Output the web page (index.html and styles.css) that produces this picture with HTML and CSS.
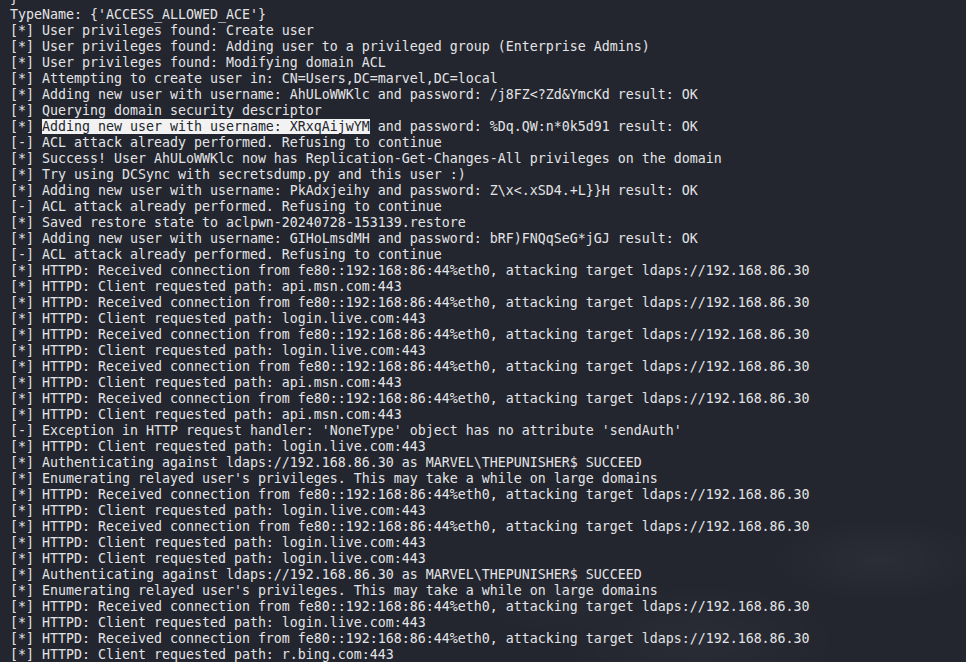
FILE: index.html
```html
<!DOCTYPE html>
<html>
<head>
<meta charset="utf-8">
<link rel="stylesheet" href="styles.css">
</head>
<body>
<div class="terminal">
<div class="wallpaper"></div>
<div class="output">
<div class="line">}</div>
<div class="line">TypeName: {'ACCESS_ALLOWED_ACE'}</div>
<div class="line">[*] User privileges found: Create user</div>
<div class="line">[*] User privileges found: Adding user to a privileged group (Enterprise Admins)</div>
<div class="line">[*] User privileges found: Modifying domain ACL</div>
<div class="line">[*] Attempting to create user in: CN=Users,DC=marvel,DC=local</div>
<div class="line">[*] Adding new user with username: AhULoWWKlc and password: /j8FZ&lt;?Zd&amp;YmcKd result: OK</div>
<div class="line">[*] Querying domain security descriptor</div>
<div class="line">[*] <span class="sel">Adding new user with username: XRxqAijwYM</span> and password: %Dq.QW:n*0k5d91 result: OK</div>
<div class="line">[-] ACL attack already performed. Refusing to continue</div>
<div class="line">[*] Success! User AhULoWWKlc now has Replication-Get-Changes-All privileges on the domain</div>
<div class="line">[*] Try using DCSync with secretsdump.py and this user :)</div>
<div class="line">[*] Adding new user with username: PkAdxjeihy and password: Z\x&lt;.xSD4.+L}}H result: OK</div>
<div class="line">[-] ACL attack already performed. Refusing to continue</div>
<div class="line">[*] Saved restore state to aclpwn-20240728-153139.restore</div>
<div class="line">[*] Adding new user with username: GIHoLmsdMH and password: bRF)FNQqSeG*jGJ result: OK</div>
<div class="line">[-] ACL attack already performed. Refusing to continue</div>
<div class="line">[*] HTTPD: Received connection from fe80::192:168:86:44%eth0, attacking target ldaps://192.168.86.30</div>
<div class="line">[*] HTTPD: Client requested path: api.msn.com:443</div>
<div class="line">[*] HTTPD: Received connection from fe80::192:168:86:44%eth0, attacking target ldaps://192.168.86.30</div>
<div class="line">[*] HTTPD: Client requested path: login.live.com:443</div>
<div class="line">[*] HTTPD: Received connection from fe80::192:168:86:44%eth0, attacking target ldaps://192.168.86.30</div>
<div class="line">[*] HTTPD: Client requested path: login.live.com:443</div>
<div class="line">[*] HTTPD: Received connection from fe80::192:168:86:44%eth0, attacking target ldaps://192.168.86.30</div>
<div class="line">[*] HTTPD: Client requested path: api.msn.com:443</div>
<div class="line">[*] HTTPD: Received connection from fe80::192:168:86:44%eth0, attacking target ldaps://192.168.86.30</div>
<div class="line">[*] HTTPD: Client requested path: api.msn.com:443</div>
<div class="line">[-] Exception in HTTP request handler: 'NoneType' object has no attribute 'sendAuth'</div>
<div class="line">[*] HTTPD: Client requested path: login.live.com:443</div>
<div class="line">[*] Authenticating against ldaps://192.168.86.30 as MARVEL\THEPUNISHER$ SUCCEED</div>
<div class="line">[*] Enumerating relayed user's privileges. This may take a while on large domains</div>
<div class="line">[*] HTTPD: Received connection from fe80::192:168:86:44%eth0, attacking target ldaps://192.168.86.30</div>
<div class="line">[*] HTTPD: Client requested path: login.live.com:443</div>
<div class="line">[*] HTTPD: Received connection from fe80::192:168:86:44%eth0, attacking target ldaps://192.168.86.30</div>
<div class="line">[*] HTTPD: Client requested path: login.live.com:443</div>
<div class="line">[*] HTTPD: Client requested path: login.live.com:443</div>
<div class="line">[*] Authenticating against ldaps://192.168.86.30 as MARVEL\THEPUNISHER$ SUCCEED</div>
<div class="line">[*] Enumerating relayed user's privileges. This may take a while on large domains</div>
<div class="line">[*] HTTPD: Received connection from fe80::192:168:86:44%eth0, attacking target ldaps://192.168.86.30</div>
<div class="line">[*] HTTPD: Client requested path: login.live.com:443</div>
<div class="line">[*] HTTPD: Received connection from fe80::192:168:86:44%eth0, attacking target ldaps://192.168.86.30</div>
<div class="line">[*] HTTPD: Client requested path: r.bing.com:443</div>
</div>
</div>
</body>
</html>
```
FILE: styles.css
```css
html, body {
  margin: 0;
  padding: 0;
  background: #23262f;
  overflow: hidden;
}
.terminal {
  position: relative;
  width: 966px;
  height: 662px;
  overflow: hidden;
  background: #23262f;
}
.wallpaper {
  position: absolute;
  inset: 0;
  background:
    radial-gradient(ellipse 160px 60px at 880px 560px, rgba(255,255,255,0.035), transparent 70%),
    radial-gradient(ellipse 200px 80px at 700px 640px, rgba(255,255,255,0.03), transparent 70%),
    radial-gradient(ellipse 120px 50px at 560px 600px, rgba(255,255,255,0.025), transparent 70%);
  pointer-events: none;
}
.output {
  position: relative;
  padding: 0 0 0 10px;
  margin-top: -9px;
  font-family: "DejaVu Sans Mono", "Liberation Mono", monospace;
  font-size: 13.29px;
  line-height: 16px;
  color: #e4e4e6;
}
.line {
  white-space: pre;
  height: 16px;
}
.sel {
  background: #f2f2f2;
  color: #23262f;
}
```
